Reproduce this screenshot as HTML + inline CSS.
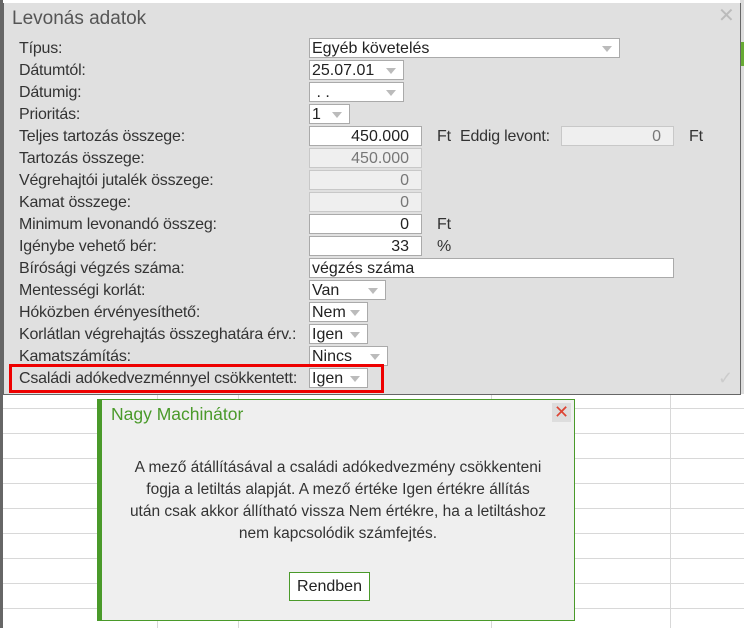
<!DOCTYPE html>
<html><head><meta charset="utf-8"><style>
*{margin:0;padding:0;box-sizing:border-box}
body{width:744px;height:628px;overflow:hidden;background:#fff;font-family:"Liberation Sans",Arial,sans-serif;position:relative;color:#333}
.a{position:absolute}
.hl{position:absolute;left:3px;right:0;height:1px;background:#d8d8d8}
.vl{position:absolute;top:394px;bottom:0;width:1px;background:#d8d8d8}
.lb{position:absolute;left:19px;font-size:16px;line-height:20px;color:#333;letter-spacing:-0.2px;top:1px}
.in{position:absolute;height:20px;border:1px solid #aaa;background:#fff;font-size:16px;line-height:19px;padding:0 2px;color:#222}
.ro{background:#efefef;color:#777;border-color:#c8c8c8}
.r{text-align:right;padding-right:12px}
.dd::after{content:"";position:absolute;right:7px;top:7px;border-left:5px solid transparent;border-right:5px solid transparent;border-top:6px solid #bbb}
</style></head><body>
<div class="a" style="left:0;top:0;width:3px;height:628px;background:#666"></div>
<div class="a" style="left:740px;top:0;width:4px;height:394px;background:#ddd"></div>
<div class="a" style="left:740px;top:42px;width:4px;height:24px;background:#6a3"></div>
<div class="hl" style="top:408px"></div><div class="hl" style="top:433px"></div><div class="hl" style="top:458px"></div><div class="hl" style="top:483px"></div><div class="hl" style="top:508px"></div><div class="hl" style="top:533px"></div><div class="hl" style="top:558px"></div><div class="hl" style="top:583px"></div><div class="hl" style="top:608px"></div>
<div class="vl" style="left:157px"></div><div class="vl" style="left:238px"></div><div class="vl" style="left:491px"></div><div class="vl" style="left:670px"></div>

<div class="a" style="left:3px;top:3px;width:738px;height:392px;background:#e0e0e0;border:1px solid #666;border-top:none"></div>
<div class="a" style="left:12px;top:8px;font-size:19px;color:#555">Levonás adatok</div>
<div class="a" style="left:718px;top:3px;font-size:20px;color:#bbb">✕</div>
<div class="a" style="left:718px;top:368px;font-size:18px;color:#ccc">✓</div>

<div class="lb" style="top:39px">Típus:</div>
<div class="lb" style="top:61px">Dátumtól:</div>
<div class="lb" style="top:83px">Dátumig:</div>
<div class="lb" style="top:105px">Prioritás:</div>
<div class="lb" style="top:127px">Teljes tartozás összege:</div>
<div class="lb" style="top:149px">Tartozás összege:</div>
<div class="lb" style="top:171px">Végrehajtói jutalék összege:</div>
<div class="lb" style="top:193px">Kamat összege:</div>
<div class="lb" style="top:215px">Minimum levonandó összeg:</div>
<div class="lb" style="top:237px">Igénybe vehető bér:</div>
<div class="lb" style="top:259px">Bírósági végzés száma:</div>
<div class="lb" style="top:281px">Mentességi korlát:</div>
<div class="lb" style="top:303px">Hóközben érvényesíthető:</div>
<div class="lb" style="top:325px">Korlátlan végrehajtás összeghatára érv.:</div>
<div class="lb" style="top:347px">Kamatszámítás:</div>
<div class="lb" style="top:369px">Családi adókedvezménnyel csökkentett:</div>

<div class="in dd" style="left:309px;top:38px;width:311px">Egyéb követelés</div>
<div class="in dd" style="left:309px;top:60px;width:95px">25.07.01</div>
<div class="in dd" style="left:309px;top:82px;width:95px">&nbsp;. .</div>
<div class="in dd" style="left:309px;top:104px;width:41px">1</div>
<div class="in r" style="left:309px;top:126px;width:113px">450.000</div>
<div class="in ro r" style="left:309px;top:148px;width:113px">450.000</div>
<div class="in ro r" style="left:309px;top:170px;width:113px">0</div>
<div class="in ro r" style="left:309px;top:192px;width:113px">0</div>
<div class="in r" style="left:309px;top:214px;width:113px">0</div>
<div class="in r" style="left:309px;top:236px;width:113px">33</div>
<div class="in" style="left:309px;top:258px;width:365px">végzés száma</div>
<div class="in dd" style="left:309px;top:280px;width:77px">Van</div>
<div class="in dd" style="left:309px;top:302px;width:59px">Nem</div>
<div class="in dd" style="left:309px;top:324px;width:59px">Igen</div>
<div class="in dd" style="left:309px;top:346px;width:79px">Nincs</div>
<div class="in dd" style="left:309px;top:368px;width:59px">Igen</div>
<div class="lb" style="left:437px;top:127px">Ft</div>
<div class="lb" style="left:460px;top:127px">Eddig levont:</div>
<div class="in ro r" style="left:561px;top:126px;width:113px">0</div>
<div class="lb" style="left:689px;top:127px">Ft</div>
<div class="lb" style="left:437px;top:215px">Ft</div>
<div class="lb" style="left:437px;top:237px">%</div>
<div class="a" style="left:9px;top:364px;width:375px;height:29px;border:3px solid #e00"></div>

<div class="a" style="left:97px;top:399px;width:478px;height:222px;background:#efefef;border:1px solid #4a9a2a;border-left:5px solid #4a9a2a"></div>
<div class="a" style="left:111px;top:404px;font-size:17.5px;color:#4a9a2a">Nagy Machinátor</div>
<div class="a" style="left:552px;top:403px;width:19px;height:19px;background:#ddd;color:#d43;font-size:18px;line-height:19px;text-align:center">✕</div>
<div class="a" style="left:102px;top:457px;width:472px;text-align:center;font-size:15.5px;line-height:22px;color:#333">A mező átállításával a családi adókedvezmény csökkenteni<br>fogja a letiltás alapját. A mező értéke Igen értékre állítás<br>után csak akkor állítható vissza Nem értékre, ha a letiltáshoz<br>nem kapcsolódik számfejtés.</div>
<div class="a" style="left:289px;top:572px;width:81px;height:29px;border:1px solid #4a9a2a;background:#fff;text-align:center;font-size:16px;line-height:27px;color:#222">Rendben</div>
</body></html>
